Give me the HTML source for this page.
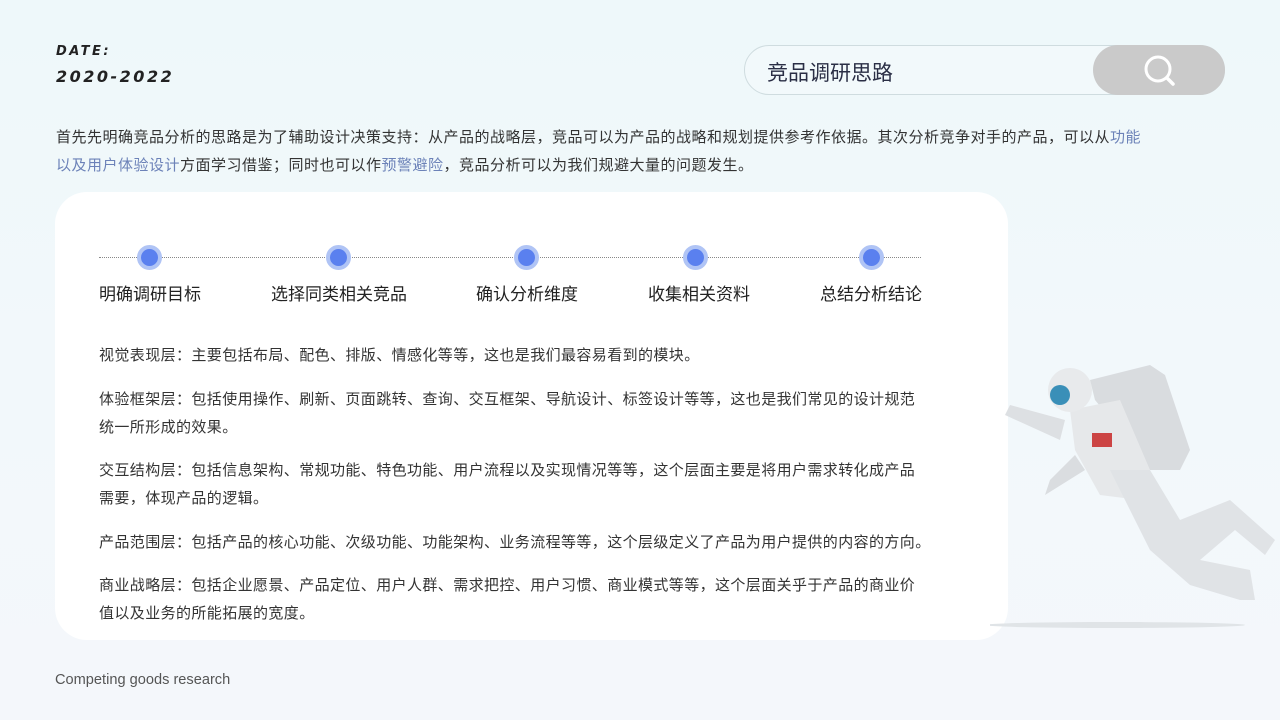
<!DOCTYPE html>
<html><head><meta charset="utf-8"><style>
*{margin:0;padding:0;box-sizing:border-box}
body{width:1280px;height:720px;overflow:hidden;position:relative;background:linear-gradient(180deg,#eef8fa 0%,#f2f8fb 50%,#f4f7fb 100%);font-family:"Liberation Sans","Noto Sans CJK SC",sans-serif;color:#333}
.date{position:absolute;left:56px;font-family:"DejaVu Sans","Liberation Sans",sans-serif;font-weight:bold;font-style:italic;color:#222;letter-spacing:2.5px}
.search{position:absolute;left:744px;top:45px;width:481px;height:50px;border:1px solid #cfdcdf;border-radius:25px;background:#f2f9fb}
.search span{position:absolute;left:22px;top:11px;font-size:21px;color:#2a2e45;font-weight:normal}
.btn{position:absolute;right:-1px;top:-1px;width:132px;height:50px;border-radius:25px;background:#cacaca}
.intro{position:absolute;left:56px;top:124px;width:1110px;font-size:15px;line-height:28px;color:#333;letter-spacing:0.5px}
.intro b{font-weight:normal;color:#6c82b8}
.card{position:absolute;left:55px;top:192px;width:953px;height:448px;background:#fff;border-radius:32px}
.line{position:absolute;left:99px;top:257px;width:822px;border-top:1px dotted #888}
.dot{position:absolute;top:245px;width:25px;height:25px;border-radius:50%;background:#5a80ef;border:4px solid #b0c4f5}
.lab{position:absolute;top:280px;font-size:17px;color:#222}
.p{position:absolute;left:99px;font-size:15px;line-height:28px;color:#333;width:830px;letter-spacing:0.4px}
.foot{position:absolute;left:55px;top:672px;font-size:14.6px;color:#555}
</style></head><body>
<div class="date" style="top:44px;font-size:13px">DATE:</div>
<div class="date" style="top:67px;font-size:16px">2020-2022</div>
<div class="search"><span>竞品调研思路</span><div class="btn"><svg width="132" height="50"><circle cx="65" cy="24" r="12" fill="none" stroke="#fff" stroke-width="3"/><line x1="74" y1="33" x2="80" y2="39" stroke="#fff" stroke-width="3.5" stroke-linecap="round"/></svg></div></div>
<div class="intro">首先先明确竞品分析的思路是为了辅助设计决策支持：从产品的战略层，竞品可以为产品的战略和规划提供参考作依据。其次分析竞争对手的产品，可以从<b>功能<br>以及用户体验设计</b>方面学习借鉴；同时也可以作<b>预警避险</b>，竞品分析可以为我们规避大量的问题发生。</div>
<div class="card"></div>
<div class="line"></div>
<div class="dot" style="left:137px"></div><div class="dot" style="left:326px"></div><div class="dot" style="left:514px"></div><div class="dot" style="left:683px"></div><div class="dot" style="left:859px"></div>
<div class="lab" style="left:99px">明确调研目标</div>
<div class="lab" style="left:271px">选择同类相关竞品</div>
<div class="lab" style="left:476px">确认分析维度</div>
<div class="lab" style="left:648px">收集相关资料</div>
<div class="lab" style="left:820px">总结分析结论</div>
<div class="p" style="top:342px">视觉表现层：主要包括布局、配色、排版、情感化等等，这也是我们最容易看到的模块。</div>
<div class="p" style="top:386px">体验框架层：包括使用操作、刷新、页面跳转、查询、交互框架、导航设计、标签设计等等，这也是我们常见的设计规范<br>统一所形成的效果。</div>
<div class="p" style="top:457px">交互结构层：包括信息架构、常规功能、特色功能、用户流程以及实现情况等等，这个层面主要是将用户需求转化成产品<br>需要，体现产品的逻辑。</div>
<div class="p" style="top:529px;width:880px">产品范围层：包括产品的核心功能、次级功能、功能架构、业务流程等等，这个层级定义了产品为用户提供的内容的方向。</div>
<div class="p" style="top:572px">商业战略层：包括企业愿景、产品定位、用户人群、需求把控、用户习惯、商业模式等等，这个层面关乎于产品的商业价<br>值以及业务的所能拓展的宽度。</div>
<svg style="position:absolute;left:990px;top:350px" width="290" height="290" viewBox="990 350 290 290">
<ellipse cx="1115" cy="625" rx="130" ry="3" fill="#e0e4e7"/>
<polygon points="1090,380 1150,365 1165,375 1190,450 1180,470 1150,470 1120,430 1095,400" fill="#d9dcdf"/>
<path d="M1070,410 L1120,400 L1150,470 L1140,500 L1100,495 L1075,450 Z" fill="#e6e8ea"/>
<path d="M1065,420 L1010,405 L1005,415 L1060,440 Z" fill="#dde0e3"/>
<path d="M1075,455 L1050,480 L1045,495 L1085,470 Z" fill="#dadde0"/>
<path d="M1110,470 L1150,470 L1180,520 L1230,500 L1275,540 L1265,555 L1235,530 L1200,560 L1250,570 L1255,600 L1240,600 L1190,585 L1150,550 Z" fill="#e0e3e6"/>
<circle cx="1070" cy="390" r="22" fill="#e8eaec"/>
<circle cx="1060" cy="395" r="10" fill="#3a8fb8"/>
<rect x="1092" y="433" width="20" height="14" fill="#c44"/>
</svg>
<div class="foot">Competing goods research</div>
</body></html>
